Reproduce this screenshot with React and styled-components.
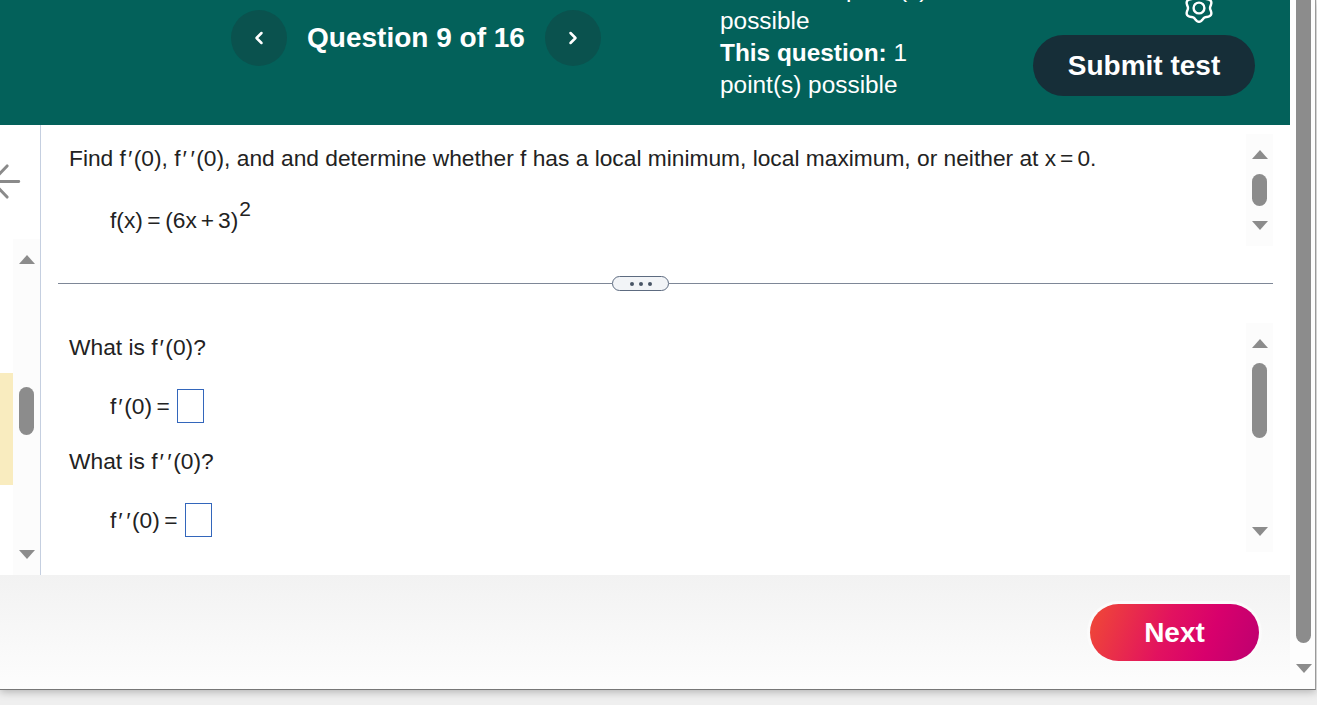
import React from 'react'
import styled, { createGlobalStyle } from 'styled-components'
import { ChevronLeft, ChevronRight } from 'lucide-react'

const Global = createGlobalStyle`
    html, body {
        margin: 0;
        padding: 0;
        height: 705px;
        overflow: hidden;
        background: #efefef;
    }
    * {
        box-sizing: border-box;
    }
`;

const Window = styled.div`
    display: flex;
    width: 1316px;
    height: 690px;
    background: #fff;
    border-right: 1px solid #9a9a9a;
    border-bottom: 1px solid #777;
    box-shadow: 0 2px 8px rgba(0, 0, 0, 0.25);
    font-family: "Liberation Sans", Arial, sans-serif;
    color: #222;
`;

const Main = styled.div`
    width: 1290px;
    display: flex;
    flex-direction: column;
`;

const Header = styled.header`
    height: 125px;
    flex: none;
    background: #03615a;
    color: #fff;
    display: flex;
    align-items: flex-end;
    overflow: hidden;
`;

const Nav = styled.div`
    align-self: flex-start;
    margin: 10px 0 0 231px;
    display: flex;
    align-items: center;
    width: 370px;
    justify-content: space-between;
`;

const NavButton = styled.button`
    width: 56px;
    height: 56px;
    border: 0;
    border-radius: 50%;
    background: #0a524e;
    color: #fff;
    padding: 0;
    display: flex;
    align-items: center;
    justify-content: center;
`;

const Title = styled.h1`
    margin: 0;
    font-size: 28px;
    font-weight: bold;
`;

const Info = styled.div`
    width: 240px;
    margin: 0 0 24px 119px;
    flex: none;
    font-size: 24.4px;
    line-height: 32px;
`;

const Actions = styled.div`
    margin-left: 73px;
    padding-bottom: 29px;
    display: flex;
    flex-direction: column;
    align-items: flex-end;
    gap: 11px;
`;

const GearIcon = styled.svg`
    width: 32px;
    height: 32px;
    margin-right: 40px;
    flex: none;
`;

const SubmitButton = styled.button`
    width: 222px;
    height: 61px;
    padding: 1px 0 0;
    border: 0;
    border-radius: 31px;
    background: #162e38;
    color: #fff;
    font-family: inherit;
    font-size: 28px;
    font-weight: bold;
`;

const Body = styled.main`
    flex: 1;
    display: flex;
    min-height: 0;
`;

const Rail = styled.aside`
    width: 41px;
    flex: none;
    border-right: 1px solid #c5cfe0;
    display: flex;
    flex-direction: column;
    padding-top: 38px;
`;

const RailRow = styled.div`
    margin-top: 39px;
    flex: 1;
    display: flex;
`;

const Highlight = styled.div`
    width: 13px;
    height: 112px;
    margin-top: 134px;
    flex: none;
    background: #f9ecbf;
`;

const Track = styled.div`
    width: 27px;
    height: ${(p) => p.$height}px;
    flex: none;
    background: #fcfcfc;
    padding: 16px 6px;
    display: flex;
    flex-direction: column;
    align-items: center;
`;

const Arrow = styled.div`
    width: 0;
    height: 0;
    flex: none;
    border-left: 8.5px solid transparent;
    border-right: 8.5px solid transparent;
    ${(p) => (p.$down ? 'border-top: 9px solid #8c8c8c;' : 'border-bottom: 9px solid #8c8c8c;')}
    ${(p) => p.$down && 'margin-top: auto;'}
`;

const Thumb = styled.div`
    width: 15px;
    height: ${(p) => p.$height}px;
    margin-top: ${(p) => p.$offset}px;
    flex: none;
    border-radius: 8px;
    background: #8c8c8c;
`;

const Content = styled.section`
    flex: 1;
    padding-top: 9px;
    display: flex;
    flex-direction: column;
    min-width: 0;
`;

const Pane = styled.div`
    display: flex;
    justify-content: space-between;
    align-items: flex-start;
    width: 1232px;
    margin-top: ${(p) => p.$top || 0}px;
`;

const PaneText = styled.div`
    padding: 8px 0 0 28px;
`;

const Question = styled.p`
    margin: ${(p) => p.$top || 0}px 0 0;
    font-size: 22.75px;
    line-height: 32px;
    height: 32px;
`;

const MathRow = styled.div`
    margin: ${(p) => p.$top || 0}px 0 0 41px;
    height: 34px;
    display: flex;
    align-items: center;
    font-size: 22.75px;
    white-space: pre;
`;

const Prime = styled.span`
    font-style: italic;
    margin: 0 2.6px 0 1px;
`;

const Op = styled.span`
    margin: 0 ${(p) => p.$gap || 4.5}px;
`;

const Sup = styled.span`
    font-size: 21px;
    line-height: 1;
    margin: -24px 0 0 1px;
`;

const AnswerBox = styled.input`
    width: 27px;
    height: 34px;
    margin-left: 3px;
    padding: 0;
    border: 1px solid #3366bb;
    background: #fff;
`;

const Divider = styled.div`
    margin: 30px 0 0 17px;
    width: 1215px;
    display: flex;
    align-items: center;
`;

const Rule = styled.div`
    height: 1px;
    background: #7e8797;
    flex: ${(p) => (p.$width ? `0 0 ${p.$width}px` : '1')};
`;

const Pill = styled.button`
    width: 57px;
    height: 15px;
    flex: none;
    padding: 0;
    border: 1.5px solid #5d6b80;
    border-radius: 8px;
    background: #f2f4f7;
    display: flex;
    align-items: center;
    justify-content: center;
    gap: 5px;
`;

const Dot = styled.span`
    width: 4px;
    height: 4px;
    border-radius: 50%;
    background: #4a5566;
`;

const Footer = styled.footer`
    height: 114px;
    flex: none;
    background: linear-gradient(#f2f2f2, #fdfdfd);
    display: flex;
    justify-content: flex-end;
    align-items: flex-start;
    padding: 29px 31px 0 0;
`;

const NextButton = styled.button`
    width: 169px;
    height: 57px;
    padding: 1px 0 0;
    border: 0;
    border-radius: 29px;
    background: linear-gradient(110deg, #f04a35 0%, #e2125f 45%, #d8006c 70%, #bd0070 100%);
    box-shadow: 0 0 0 3px #fbfbfb;
    color: #fff;
    font-family: inherit;
    font-size: 28px;
    font-weight: bold;
`;

const OuterBar = styled.div`
    width: 25px;
    flex: none;
    background: #fdfdfd;
    padding: 0 4px 16px 6px;
    display: flex;
    flex-direction: column;
    align-items: center;
`;

const OuterThumb = styled.div`
    width: 15px;
    height: 643px;
    flex: none;
    background: #8c8c8c;
    border-radius: 0 0 8px 8px;
`;

const f1 = <>f<Prime>′</Prime>(0)</>
const f2 = <>f<Prime>′</Prime><Prime>′</Prime>(0)</>

// six soft lobes, one pointing straight down
const gearPoints = Array.from({ length: 72 }, (_, i) => {
    const a = (i / 72) * Math.PI * 2
    const r = 12.4 + 1.4 * Math.cos(6 * (a - Math.PI / 2))
    return `${(16 + r * Math.cos(a)).toFixed(2)},${(16 + r * Math.sin(a)).toFixed(2)}`
}).join(' ')

const Gear = () => (
    <GearIcon viewBox="0 0 32 32" fill="none" stroke="#fff" strokeWidth="2.4">
        <polygon points={gearPoints} strokeLinejoin="round" />
        <circle cx="16" cy="16" r="5.4" />
    </GearIcon>
)

const BackArrow = () => (
    <svg width="21" height="38" viewBox="0 0 21 38" fill="none" stroke="#8a8a8a" strokeWidth="3" strokeLinecap="round">
        <path d="M0 19H19M7 3L-8 19L7 35" />
    </svg>
)

const App = () => {
    return (
        <>
            <Global />
            <Window>
                <Main>
                    <Header>
                        <Nav>
                            <NavButton><ChevronLeft size={20} strokeWidth={3} /></NavButton>
                            <Title>Question 9 of 16</Title>
                            <NavButton><ChevronRight size={20} strokeWidth={3} /></NavButton>
                        </Nav>
                        <Info>
                            This test: 1 point(s) possible<br />
                            <b>This question:</b> 1 point(s) possible
                        </Info>
                        <Actions>
                            <Gear />
                            <SubmitButton>Submit test</SubmitButton>
                        </Actions>
                    </Header>
                    <Body>
                        <Rail>
                            <BackArrow />
                            <RailRow>
                                <Highlight />
                                <Track $height={336}>
                                    <Arrow />
                                    <Thumb $height={48} $offset={123} />
                                    <Arrow $down />
                                </Track>
                            </RailRow>
                        </Rail>
                        <Content>
                            <Pane>
                                <PaneText>
                                    <Question>
                                        Find {f1}, {f2}, and and determine whether f has a local minimum, local maximum, or neither at x<Op $gap={4}>=</Op>0.
                                    </Question>
                                    <MathRow $top={29}>f(x)<Op>=</Op>(6x<Op $gap={4}>+</Op>3)<Sup>2</Sup></MathRow>
                                </PaneText>
                                <Track $height={112}>
                                    <Arrow />
                                    <Thumb $height={32} $offset={15} />
                                    <Arrow $down />
                                </Track>
                            </Pane>
                            <Divider>
                                <Rule $width={554} />
                                <Pill><Dot /><Dot /><Dot /></Pill>
                                <Rule />
                            </Divider>
                            <Pane $top={32}>
                                <PaneText>
                                    <Question>What is {f1}?</Question>
                                    <MathRow $top={26}>{f1}<Op>=</Op><AnswerBox /></MathRow>
                                    <Question $top={22}>What is {f2}?</Question>
                                    <MathRow $top={26}>{f2}<Op>=</Op><AnswerBox /></MathRow>
                                </PaneText>
                                <Track $height={229}>
                                    <Arrow />
                                    <Thumb $height={75} $offset={15} />
                                    <Arrow $down />
                                </Track>
                            </Pane>
                        </Content>
                    </Body>
                    <Footer>
                        <NextButton>Next</NextButton>
                    </Footer>
                </Main>
                <OuterBar>
                    <OuterThumb />
                    <Arrow $down />
                </OuterBar>
            </Window>
        </>
    )
}

export default App
